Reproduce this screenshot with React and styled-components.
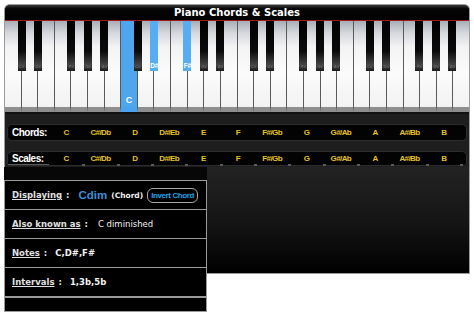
import React from "react";
import styled, { createGlobalStyle } from "styled-components";

const GlobalStyle = createGlobalStyle`
  *, *::before, *::after {
    box-sizing: border-box;
  }
  body {
    margin: 0;
    background: #fff;
    font-family: "DejaVu Sans", Verdana, sans-serif;
  }
`;

const NOTES = ["C", "C#/Db", "D", "D#/Eb", "E", "F", "F#/Gb", "G", "G#/Ab", "A", "A#/Bb", "B"];
const WHITE_COUNT = 28;
// boundaries inside one octave where a black key sits
const BLACK_SPOTS = [
  { at: 1, name: "C#" },
  { at: 2, name: "D#" },
  { at: 4, name: "F#" },
  { at: 5, name: "G#" },
  { at: 6, name: "A#" },
];
const ACTIVE_WHITE = [7];
const ACTIVE_BLACK = ["1-D#", "1-F#"];

const App = () => {
  const blacks = [];
  for (let o = 0; o < 4; o++) {
    BLACK_SPOTS.forEach((b) => {
      blacks.push({ key: `${o}-${b.name}`, pos: o * 7 + b.at, name: b.name });
    });
  }

  return (
    <Page>
      <GlobalStyle />
      <Head>
        <TitleBar>Piano Chords &amp; Scales</TitleBar>
        <Keyboard>
          {Array.from({ length: WHITE_COUNT }).map((_, i) => (
            <WhiteKey key={i} $active={ACTIVE_WHITE.includes(i)}>
              {ACTIVE_WHITE.includes(i) && <KeyLabel>C</KeyLabel>}
            </WhiteKey>
          ))}
          {blacks.map((b) => {
            const active = ACTIVE_BLACK.includes(b.key);
            return (
              <BlackKey
                key={b.key}
                $active={active}
                style={{ left: `calc(${(b.pos / WHITE_COUNT) * 100}% - 4px)` }}
              >
                <BlackLabel $active={active}>{b.name}</BlackLabel>
              </BlackKey>
            );
          })}
        </Keyboard>

        <NoteBar>
          <BarLabel>Chords:</BarLabel>
          {NOTES.map((n) => (
            <NoteCell key={n}>{n}</NoteCell>
          ))}
        </NoteBar>

        <NoteBar $tabs>
          <BarLabel $tab>Scales:</BarLabel>
          {NOTES.map((n) => (
            <NoteCell key={n} $tab>
              {n}
            </NoteCell>
          ))}
        </NoteBar>
      </Head>

      <Bottom>
        <InfoColumn>
          <InfoTable>
            <InfoRow>
              <Label>Displaying</Label>
              <Colon>:</Colon>
              <ChordName>Cdim</ChordName>
              <Kind>(Chord)</Kind>
              <InvertButton>Invert Chord</InvertButton>
            </InfoRow>
            <InfoRow>
              <Label>Also known as</Label>
              <Colon>:</Colon>
              <Value $gap={10}>C diminished</Value>
            </InfoRow>
            <InfoRow>
              <Label>Notes</Label>
              <Colon>:</Colon>
              <Value $bold>C,D#,F#</Value>
            </InfoRow>
            <InfoRow>
              <Label>Intervals</Label>
              <Colon>:</Colon>
              <Value $bold>1,3b,5b</Value>
            </InfoRow>
            <EmptyRow />
          </InfoTable>
        </InfoColumn>
        <ShadeBox />
      </Bottom>
    </Page>
  );
};

const Page = styled.div`
  width: 466px;
  margin: 4px;
`;

const Head = styled.div`
  border: 1px solid #9c9c9c;
  border-bottom: none;
  border-radius: 6px 6px 0 0;
  background: #1e1e1e;
  padding-bottom: 1px;
`;

const TitleBar = styled.div`
  height: 16px;
  border-radius: 5px 5px 0 0;
  background: linear-gradient(#3a3a3a 0%, #050505 25%, #000 100%);
  border-bottom: 1px solid #9a1c1c;
  color: #fff;
  font-family: "DejaVu Sans", Verdana, sans-serif;
  font-weight: bold;
  font-size: 10px;
  line-height: 15px;
  text-align: center;
`;

const Keyboard = styled.div`
  position: relative;
  display: flex;
  height: 93px;
  border-bottom: 2px solid #121212;
`;

const WhiteKey = styled.div`
  flex: 1;
  border-left: 1px solid #5a5a5a;
  border-bottom: 5px solid ${(p) => (p.$active ? "#4aa3ee" : "#8e8e8e")};
  background: ${(p) =>
    p.$active
      ? "#4ea6ef"
      : "linear-gradient(#a9adb6 0%, #d6d8dd 14%, #f3f3f4 30%, #fbfbfb 60%, #f2f2f2 100%)"};
  display: flex;
  align-items: flex-end;
  justify-content: center;
  &:first-child {
    border-left: none;
  }
`;

const KeyLabel = styled.span`
  color: #fff;
  font-family: "Liberation Sans", Arial, sans-serif;
  font-weight: bold;
  font-size: 9px;
  margin-bottom: 2px;
`;

const BlackKey = styled.div`
  position: absolute;
  top: 0;
  width: 8px;
  height: 50px;
  background: ${(p) =>
    p.$active
      ? "#56adf3"
      : "linear-gradient(#000 0%, #0a0a0a 60%, #444 88%, #1a1a1a 100%)"};
  display: flex;
  align-items: flex-end;
  justify-content: center;
`;

const BlackLabel = styled.span`
  color: ${(p) => (p.$active ? "#fff" : "#6a6a6a")};
  font-family: "Liberation Sans", Arial, sans-serif;
  font-weight: bold;
  font-size: ${(p) => (p.$active ? "6.5px" : "4px")};
  letter-spacing: ${(p) => (p.$active ? "-0.3px" : "0")};
  white-space: nowrap;
  margin-bottom: 2px;
`;

const NoteBar = styled.div`
  display: grid;
  grid-template-columns: 41px repeat(12, 1fr);
  margin: ${(p) => (p.$tabs ? "0 2px" : "10px 2px")};
  height: ${(p) => (p.$tabs ? "15px" : "17px")};
  padding-right: 5px;
  background: #030303;
  border: 1px solid #2c2c2c;
  border-radius: ${(p) => (p.$tabs ? "5px 5px 3px 3px" : "5px")};
  align-items: center;
`;

const BarLabel = styled.div`
  height: 100%;
  display: flex;
  align-items: center;
  padding-left: 4px;
  color: #fff;
  font-family: "Liberation Sans", Arial, sans-serif;
  font-weight: bold;
  font-size: 10px;
  letter-spacing: -0.5px;
  border-bottom: ${(p) => (p.$tab ? "1px solid #5a5a5a" : "none")};
`;

const NoteCell = styled.div`
  position: relative;
  height: 100%;
  display: flex;
  align-items: center;
  justify-content: center;
  color: #e6c21e;
  font-family: "Liberation Sans", Arial, sans-serif;
  font-weight: bold;
  font-size: 8px;
  letter-spacing: -0.6px;
  &::after {
    content: "";
    display: ${(p) => (p.$tab ? "block" : "none")};
    position: absolute;
    right: -2px;
    bottom: -1px;
    width: 3px;
    height: 2px;
    background: #5c5c5c;
  }
`;

const Bottom = styled.div`
  display: flex;
  align-items: flex-start;
`;

const InfoColumn = styled.div`
  width: 203px;
  padding-top: 13px;
  background: linear-gradient(#070707 0px, #070707 13px, transparent 13px);
`;

const InfoTable = styled.div`
  display: flex;
  flex-direction: column;
  border: 1px solid #9a9a9a;
  border-bottom: none;
  background: #000;
`;

const InfoRow = styled.div`
  display: flex;
  align-items: center;
  height: 29px;
  padding-left: 7px;
  border-bottom: 1px solid #9a9a9a;
  color: #e4e4e4;
  font-size: 8.5px;
  white-space: nowrap;
`;

const EmptyRow = styled.div`
  height: 15px;
  border-top: 1px solid #9a9a9a;
  border-bottom: 1px solid #9a9a9a;
`;

const Label = styled.span`
  font-weight: bold;
  text-decoration: underline;
  color: #e0e0e0;
`;

const Colon = styled.span`
  font-weight: bold;
  margin-left: 4px;
`;

const ChordName = styled.span`
  margin-left: 9px;
  color: #3b8fd8;
  font-family: "Liberation Sans", Arial, sans-serif;
  font-size: 11.5px;
  font-weight: bold;
`;

const Kind = styled.span`
  margin-left: 4px;
  font-weight: bold;
  font-size: 7.5px;
  color: #f0f0f0;
`;

const InvertButton = styled.button`
  margin-left: 4px;
  height: 15px;
  padding: 0 3px;
  background: #000;
  border: 1px solid #a8a8a8;
  border-radius: 6px;
  color: #1fa2e6;
  font-family: "Liberation Sans", Arial, sans-serif;
  font-weight: bold;
  font-size: 8px;
  letter-spacing: -0.4px;
  line-height: 13px;
  white-space: nowrap;
`;

const Value = styled.span`
  margin-left: ${(p) => p.$gap || 8}px;
  color: #f2f2f2;
  font-weight: ${(p) => (p.$bold ? "bold" : "normal")};
`;

const ShadeBox = styled.div`
  flex: 1;
  height: 107px;
  border-right: 1px solid #9c9c9c;
  border-bottom: 1px solid #9c9c9c;
  background: linear-gradient(#232323 0%, #141414 55%, #000 100%);
`;

export default App;
